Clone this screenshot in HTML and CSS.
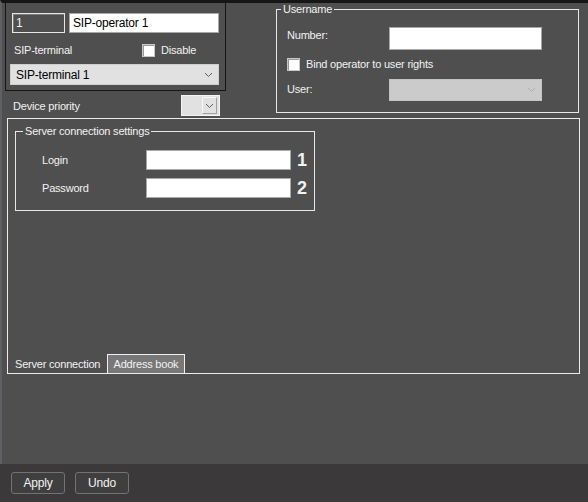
FILE: index.html
```html
<!DOCTYPE html>
<html>
<head>
<meta charset="utf-8">
<link rel="stylesheet" href="styles.css">
</head>
<body>
<div class="window">
  <div class="main">
    <div class="top">
      <div class="left-col">
        <div class="op-panel">
          <div class="row1">
            <div class="id-input">1</div>
            <div class="name-input">SIP-operator 1</div>
          </div>
          <div class="row2">
            <span class="lbl term-lbl">SIP-terminal</span>
            <span class="check"><span class="box"></span><span class="lbl">Disable</span></span>
          </div>
          <div class="combo">
            <span>SIP-terminal 1</span>
            <svg class="chev" width="9" height="6" viewBox="0 0 9 6"><polyline points="1,1 4.5,4.5 8,1" fill="none" stroke="#606060" stroke-width="1"/></svg>
          </div>
        </div>
        <div class="priority-row">
          <span class="lbl">Device priority</span>
          <div class="mini-combo">
            <span class="mini-btn"><svg width="9" height="6" viewBox="0 0 9 6"><polyline points="1,1 4.5,4.5 8,1" fill="none" stroke="#606060" stroke-width="1"/></svg></span>
          </div>
        </div>
      </div>
      <fieldset class="group user-group">
        <legend>Username</legend>
        <div class="user-grid">
          <span class="lbl num-lbl">Number:</span>
          <div class="white-input num-input"></div>
          <span class="check span2"><span class="box"></span><span class="lbl">Bind operator to user rights</span></span>
          <span class="lbl">User:</span>
          <div class="combo disabled">
            <span></span>
            <svg class="chev" width="9" height="6" viewBox="0 0 9 6"><polyline points="1,1 4.5,4.5 8,1" fill="none" stroke="#b0b0b0" stroke-width="1"/></svg>
          </div>
        </div>
      </fieldset>
    </div>
    <div class="tabpanel">
      <fieldset class="group server-group">
        <legend>Server connection settings</legend>
        <div class="server-grid">
          <span class="lbl">Login</span>
          <div class="white-input cred-input"></div>
          <span class="num">1</span>
          <span class="lbl">Password</span>
          <div class="white-input cred-input"></div>
          <span class="num">2</span>
        </div>
      </fieldset>
      <div class="tabs">
        <span class="tab active">Server connection</span>
        <span class="tab other">Address book</span>
      </div>
    </div>
  </div>
  <div class="footer">
    <button class="btn">Apply</button>
    <button class="btn">Undo</button>
  </div>
</div>
</body>
</html>
```

FILE: styles.css
```css
html, body {
  margin: 0;
  padding: 0;
}
body {
  width: 588px;
  height: 502px;
  overflow: hidden;
  background: #4f4f4f;
  font-family: "Liberation Sans", Arial, sans-serif;
  font-size: 11px;
  letter-spacing: -0.2px;
  color: #f2f2f2;
}
.window {
  width: 588px;
  height: 502px;
  display: flex;
  flex-direction: column;
}
.main {
  height: 461px;
  border-top: 3px solid #161616;
  border-left: 2px solid #5d6064;
  display: flex;
  flex-direction: column;
}
.top {
  display: flex;
  height: 115px;
}
.left-col {
  width: 221px;
  margin-left: 3px;
}
.op-panel {
  box-sizing: border-box;
  height: 88px;
  border: 1px solid #151515;
  border-top: none;
  padding: 10px 6px 0 4px;
}
.row1 {
  display: flex;
  gap: 4px;
  height: 20px;
}
.id-input {
  box-sizing: border-box;
  margin-left: 2px;
  width: 53px;
  height: 20px;
  border: 1px solid #e6e6e6;
  box-shadow: inset 1px 1px 0 #7a7a7a;
  padding: 3px 0 0 3px;
  line-height: 13px;
  font-size: 12px;
}
.name-input {
  box-sizing: border-box;
  width: 150px;
  height: 20px;
  background: #fff;
  border: 1px solid #a8a8a8;
  color: #000;
  padding: 3px 0 0 3px;
  line-height: 13px;
  font-size: 12px;
}
.row2 {
  display: flex;
  align-items: center;
  height: 14px;
  margin-top: 10px;
}
.lbl {
  line-height: 14px;
  white-space: nowrap;
}
.term-lbl {
  margin-left: 4px;
  width: 128px;
}
.check {
  display: flex;
  align-items: center;
}
.box {
  box-sizing: border-box;
  width: 13px;
  height: 13px;
  background: #fff;
  border: 1px solid #c8c8c8;
  box-shadow: inset 1px 1px 0 #9a9a9a;
  margin-right: 6px;
}
.combo {
  box-sizing: border-box;
  margin-top: 7px;
  width: 209px;
  height: 21px;
  background: #e1e1e1;
  border: 1px solid #cfcfcf;
  color: #000;
  display: flex;
  align-items: center;
  justify-content: space-between;
  padding: 0 5px 0 5px;
  font-size: 12px;
}
.chev {
  display: block;
}
.priority-row {
  display: flex;
  align-items: center;
  height: 25px;
  margin-top: 2px;
}
.priority-row .lbl {
  margin-left: 8px;
  width: 168px;
}
.mini-combo {
  box-sizing: border-box;
  width: 39px;
  height: 21px;
  background: #e1e1e1;
  border: 1px solid #f4f4f4;
  display: flex;
  justify-content: flex-end;
  align-items: stretch;
  padding: 1px 2px 1px 0;
}
.mini-btn {
  box-sizing: border-box;
  width: 15px;
  border: 1px solid #f8f8f8;
  border-right-color: #a0a0a0;
  border-bottom-color: #a0a0a0;
  display: flex;
  align-items: center;
  justify-content: center;
}
.group {
  margin: 0;
  padding: 0;
  border: 1px solid #e8e8e8;
  box-sizing: border-box;
  min-width: 0;
}
.group legend {
  padding: 0 2px;
  line-height: 12px;
  color: #f2f2f2;
}
.user-group {
  margin-left: 50px;
  width: 303px;
  height: 110px;
}
.user-group legend {
  margin-left: 4px;
}
.user-grid {
  display: grid;
  grid-template-columns: 102px 153px;
  grid-template-rows: 23px 14px 22px;
  row-gap: 7px;
  padding-left: 10px;
  margin-top: 12px;
  align-items: center;
}
.num-lbl {
  align-self: start;
  margin-top: 1px;
}
.user-grid .span2 {
  grid-column: 1 / 3;
}
.user-grid .combo.disabled {
  margin-top: 2px;
  width: 153px;
  height: 22px;
  background: #cbcbcb;
  border-color: #c4c4c4;
}
.white-input {
  box-sizing: border-box;
  background: #fff;
  border: 1px solid #a8a8a8;
}
.num-input {
  width: 153px;
  height: 23px;
}
.tabpanel {
  box-sizing: border-box;
  margin-left: 5px;
  width: 573px;
  height: 256px;
  border: 1px solid #ececec;
  display: flex;
  flex-direction: column;
}
.server-group {
  margin-top: 6px;
  margin-left: 7px;
  width: 300px;
  height: 86px;
}
.server-group legend {
  margin-left: 7px;
}
.server-grid {
  display: grid;
  grid-template-columns: 104px 145px auto;
  grid-template-rows: 20px 20px;
  row-gap: 8px;
  align-items: center;
  margin-top: 13px;
  padding-left: 26px;
}
.cred-input {
  height: 20px;
}
.num {
  margin-left: 6px;
  font-size: 18px;
  font-weight: bold;
  letter-spacing: 0;
  line-height: 20px;
}
.tabs {
  margin-top: auto;
  display: flex;
  align-items: flex-end;
  height: 19px;
}
.tab {
  line-height: 18px;
  white-space: nowrap;
}
.tab.active {
  padding: 0 4px 0 7px;
  width: 88px;
  box-sizing: content-box;
}
.tab.other {
  box-sizing: border-box;
  width: 78px;
  height: 19px;
  border: 1px solid #efefef;
  border-bottom: none;
  background: #787878;
  text-align: center;
  line-height: 18px;
}
.footer {
  height: 38px;
  background: #3b3939;
  display: flex;
  gap: 10px;
  padding: 8px 0 0 11px;
  box-sizing: border-box;
}
.btn {
  width: 54px;
  height: 22px;
  background: #403f40;
  border: 1px solid #747374;
  border-radius: 3px;
  color: #f2f2f2;
  font-family: "Liberation Sans", Arial, sans-serif;
  font-size: 12px;
  letter-spacing: -0.2px;
  padding: 0;
}
```
